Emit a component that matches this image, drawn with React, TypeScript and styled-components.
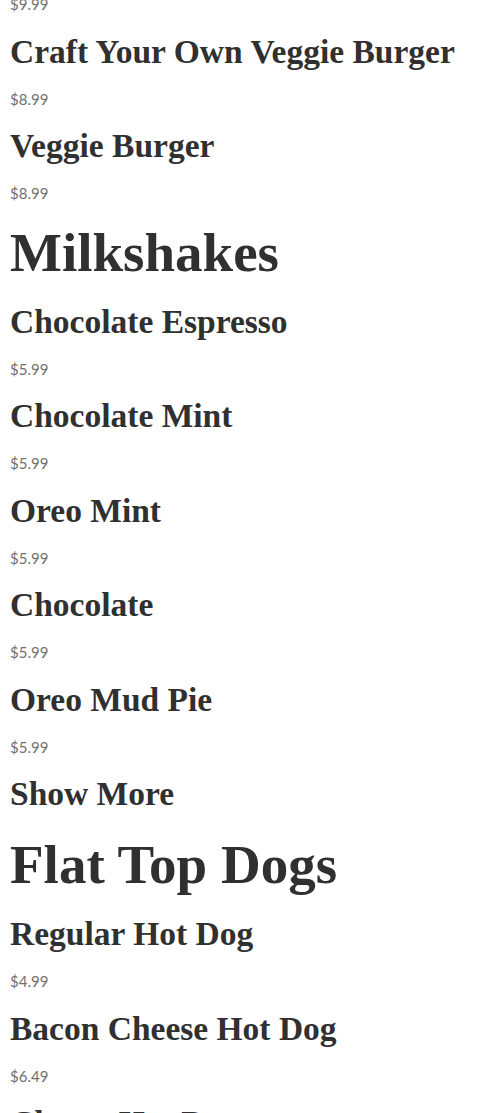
import React from "react";
import styled, { createGlobalStyle } from "styled-components";

const GlobalStyle = createGlobalStyle`
  html, body {
    margin: 0;
    padding: 0;
    background: #ffffff;
  }
  body {
    overflow: hidden;
  }
`;

const Page = styled.main`
  padding: 0 10px;
  margin-top: -67px;
`;

const Section = styled.section`
  display: flex;
  flex-direction: column;
`;

const Heading = styled.h2`
  margin: 1px 0 10px;
  font-family: "Liberation Serif", "Times New Roman", serif;
  font-weight: 700;
  font-size: 55px;
  line-height: 70px;
  color: #303030;
`;

const ItemTitle = styled.h3`
  margin: 0;
  font-family: "Liberation Serif", "Times New Roman", serif;
  font-weight: 700;
  font-size: 33.5px;
  line-height: 48px;
  color: #303030;
  white-space: nowrap;
`;

const Price = styled.p`
  margin: 0;
  font-family: Lato, "Liberation Sans", sans-serif;
  font-size: 15px;
  line-height: 46.5px;
  color: #707070;
`;

const ShowMore = styled.button`
  align-self: flex-start;
  margin: 0 0 11px;
  padding: 0;
  border: 0;
  background: none;
  font-family: "Liberation Serif", "Times New Roman", serif;
  font-weight: 700;
  font-size: 33.5px;
  line-height: 48px;
  color: #303030;
  cursor: pointer;
`;

type Item = { name: string; price: string };
type Group = { title?: string; items: Item[]; more?: boolean };

const menu: Group[] = [
  {
    items: [
      { name: "Impossible Burger", price: "$9.99" },
      { name: "Craft Your Own Veggie Burger", price: "$8.99" },
      { name: "Veggie Burger", price: "$8.99" },
    ],
  },
  {
    title: "Milkshakes",
    more: true,
    items: [
      { name: "Chocolate Espresso", price: "$5.99" },
      { name: "Chocolate Mint", price: "$5.99" },
      { name: "Oreo Mint", price: "$5.99" },
      { name: "Chocolate", price: "$5.99" },
      { name: "Oreo Mud Pie", price: "$5.99" },
    ],
  },
  {
    title: "Flat Top Dogs",
    items: [
      { name: "Regular Hot Dog", price: "$4.99" },
      { name: "Bacon Cheese Hot Dog", price: "$6.49" },
      { name: "Cheese Hot Dog", price: "$5.49" },
    ],
  },
];

const App: React.FC = () => {
  return (
    <>
      <GlobalStyle />
      <Page>
        {menu.map((group, i) => (
          <Section key={i}>
            {group.title && <Heading>{group.title}</Heading>}
            {group.items.map((item) => (
              <div key={item.name}>
                <ItemTitle>{item.name}</ItemTitle>
                <Price>{item.price}</Price>
              </div>
            ))}
            {group.more && <ShowMore>Show More</ShowMore>}
          </Section>
        ))}
      </Page>
    </>
  );
};

export default App;
